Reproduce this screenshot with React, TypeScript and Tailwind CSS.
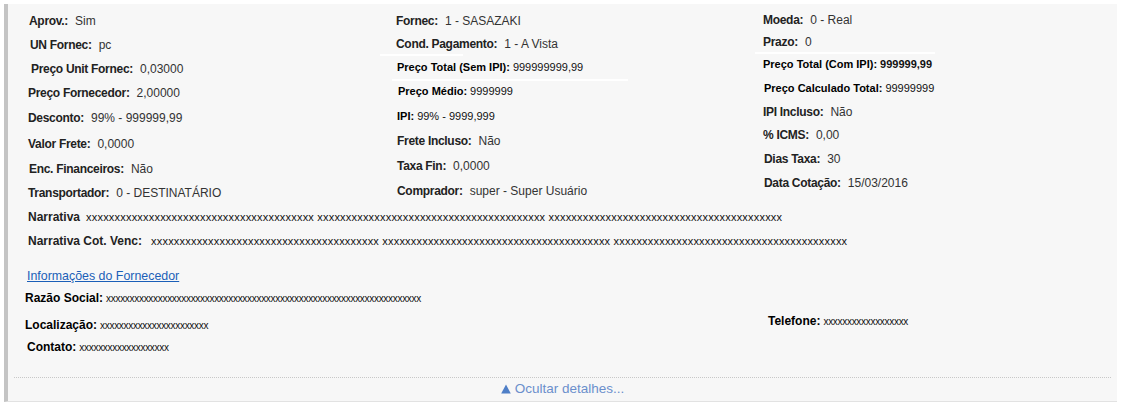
import React from "react";

type Field = {
  label: string;
  value: string;
  h: number;
  tight?: boolean;
  boldValue?: boolean;
  dx?: number;
  line?: string;
};

const col1: Field[] = [
  { label: "Aprov.:", value: "Sim", h: 24, dx: 1 },
  { label: "UN Fornec:", value: "pc", h: 24, dx: 2 },
  { label: "Preço Unit Fornec:", value: "0,03000", h: 24, dx: 3 },
  { label: "Preço Fornecedor:", value: "2,00000", h: 24 },
  { label: "Desconto:", value: "99% - 999999,99", h: 26 },
  { label: "Valor Frete:", value: "0,0000", h: 26, dx: -1 },
  { label: "Enc. Financeiros:", value: "Não", h: 24, dx: 1 },
  { label: "Transportador:", value: "0 - DESTINATÁRIO", h: 24 },
];

const col2: Field[] = [
  { label: "Fornec:", value: "1 - SASAZAKI", h: 24 },
  { label: "Cond. Pagamento:", value: "1 - A Vista", h: 22 },
  { label: "Preço Total (Sem IPI):", value: "999999999,99", h: 25, tight: true, dx: 1, line: "before:w-[83px] before:-left-[16px]" },
  { label: "Preço Médio:", value: "9999999", h: 23, tight: true, dx: 2, line: "before:w-[236px] before:-left-[4px]" },
  { label: "IPI:", value: "99% - 9999,999", h: 26, tight: true, dx: 1 },
  { label: "Frete Incluso:", value: "Não", h: 24, dx: 1 },
  { label: "Taxa Fin:", value: "0,0000", h: 26, dx: 1 },
  { label: "Comprador:", value: "super - Super Usuário", h: 24, dx: 1 },
];

const col3: Field[] = [
  { label: "Moeda:", value: "0 - Real", h: 22 },
  { label: "Prazo:", value: "0", h: 22 },
  { label: "Preço Total (Com IPI):", value: "999999,99", h: 23, tight: true, boldValue: true, line: "before:w-[180px] before:-left-[8px]" },
  { label: "Preço Calculado Total:", value: "99999999", h: 24, tight: true, dx: 1 },
  { label: "IPI Incluso:", value: "Não", h: 23 },
  { label: "% ICMS:", value: "0,00", h: 24 },
  { label: "Dias Taxa:", value: "30", h: 24, dx: 1 },
  { label: "Data Cotação:", value: "15/03/2016", h: 24, dx: 1 },
];

const xs = (n: number) => "x".repeat(n);

const Row = ({ f }: { f: Field }) => (
  <div
    className={`relative flex items-center whitespace-nowrap ${
      f.line ? "before:absolute before:top-[-1px] before:h-[2px] before:bg-white before:content-['']" : ""
    } ${f.line ?? ""}`}
    style={{ height: f.h, paddingLeft: f.dx ?? 0 }}
  >
    {f.tight ? (
      <>
        <span className="text-[11px] font-bold text-black">{f.label}</span>
        <span className={`ml-[3px] text-[11px] text-[#111] ${f.boldValue ? "font-bold" : ""}`}>
          {f.value}
        </span>
      </>
    ) : (
      <>
        <span className="text-[12px] font-bold tracking-[-0.3px] text-[#222]">{f.label}</span>
        <span className="ml-[7px] text-[12px] text-[#333]">{f.value}</span>
      </>
    )}
  </div>
);

export default function App() {
  return (
    <div className="min-h-[409px] bg-white pt-[4px] pl-[4px] pr-[20px] font-['Liberation_Sans',Arial,sans-serif]">
      <div className="border-l-[4px] border-b border-l-[#c4c4c4] border-b-[#e2e2e2] bg-[#f7f7f7]">
        <div className="pl-[20px] pt-[5px]">
          <div className="grid grid-cols-[368px_367px_1fr]">
            <div className="flex flex-col">
              {col1.map((f) => (
                <Row key={f.label} f={f} />
              ))}
            </div>
            <div className="flex flex-col">
              {col2.map((f) => (
                <Row key={f.label} f={f} />
              ))}
            </div>
            <div className="flex flex-col">
              {col3.map((f) => (
                <Row key={f.label} f={f} />
              ))}
            </div>
          </div>

          {/* Narrativas */}
          <div className="flex h-[24px] items-center whitespace-nowrap">
            <span className="text-[12px] font-bold text-[#222]">Narrativa</span>
            <span className="ml-[6px] text-[11px] tracking-[0.2px] text-[#111]">
              {xs(40)} {xs(40)} {xs(41)}
            </span>
          </div>
          <div className="flex h-[24px] items-center whitespace-nowrap">
            <span className="text-[12px] font-bold text-[#222]">Narrativa Cot. Venc:</span>
            <span className="ml-[9px] text-[11px] tracking-[0.2px] text-[#111]">
              {xs(40)} {xs(40)} {xs(41)}
            </span>
          </div>

          {/* Fornecedor */}
          <div className="mt-[13px] flex h-[20px] items-center">
            <a href="#" className="-ml-[1px] text-[12.4px] text-[#1b5fb8] underline">
              Informações do Fornecedor
            </a>
          </div>
          <div className="grid grid-cols-[740px_1fr]">
            <div className="-ml-[3px] flex flex-col">
              <div className="flex h-[24px] items-center whitespace-nowrap">
                <span className="text-[12px] font-bold text-black">Razão Social:</span>
                <span className="ml-[3px] text-[10px] tracking-[-0.3px] text-[#111]">{xs(67)}</span>
              </div>
              <div className="flex h-[26px] items-center whitespace-nowrap pt-[4px]">
                <span className="text-[12px] font-bold text-black">Localização:</span>
                <span className="ml-[3px] text-[10px] tracking-[-0.3px] text-[#111]">{xs(23)}</span>
              </div>
              <div className="flex h-[22px] items-center whitespace-nowrap pl-[2px]">
                <span className="text-[12px] font-bold text-black">Contato:</span>
                <span className="ml-[3px] text-[10px] tracking-[-0.3px] text-[#111]">{xs(19)}</span>
              </div>
            </div>
            <div className="flex flex-col pt-[23px]">
              <div className="flex h-[24px] items-center whitespace-nowrap">
                <span className="text-[12px] font-bold text-black">Telefone:</span>
                <span className="ml-[3px] text-[10px] tracking-[-0.3px] text-[#111]">{xs(18)}</span>
              </div>
            </div>
          </div>
        </div>

        {/* Rodapé */}
        <div className="mx-[6px] mt-[19px] border-t border-dotted border-[#c8c8c8]" />
        <div className="flex h-[23px] items-center justify-center">
          <a href="#" className="flex items-center text-[13.5px] text-[#6b8fcc]">
            <svg width="10" height="10" viewBox="0 0 10 10" className="mr-[4px] mb-[1px]">
              <polygon points="5,0.5 9.8,9.5 0.2,9.5" fill="#4f7fc7" />
            </svg>
            Ocultar detalhes...
          </a>
        </div>
      </div>
    </div>
  );
}
